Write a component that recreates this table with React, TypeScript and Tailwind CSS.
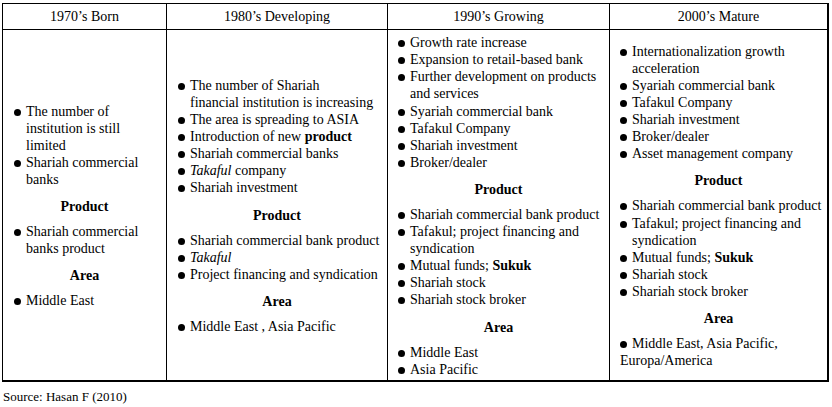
import React from 'react';

const Dot = () => (
  <span className="mt-[6px] mr-[5px] h-[7px] w-[7px] shrink-0 rounded-full bg-black" />
);

const Item = ({ children }: { children: React.ReactNode }) => (
  <div className="flex items-start">
    <Dot />
    <div className="whitespace-nowrap">{children}</div>
  </div>
);

const Heading = ({ children }: { children: React.ReactNode }) => (
  <div className="mt-[10px] mb-[8px] text-center font-bold">{children}</div>
);

const headers = ['1970’s Born', '1980’s Developing', '1990’s Growing', '2000’s Mature'];

export default function App() {
  return (
    <div className="h-[407px] w-[832px] overflow-hidden bg-white pt-[3px] pl-[2px] font-['Liberation_Serif','Times_New_Roman',serif] text-[14px] leading-[17.1px] text-black">
      <div className="grid w-[827px] grid-cols-[164px_221px_222px_219px] border-t border-l border-black">
        {/* header row */}
        {headers.map((h, i) => (
          <div
            key={h}
            className={`flex h-[26px] items-center justify-center border-b border-black ${
              i === 3 ? 'border-r-2' : 'border-r'
            }`}
          >
            {h}
          </div>
        ))}

        {/* 1970's */}
        <div className="flex h-[352px] flex-col justify-center border-r border-b-2 border-black px-[11px] pt-[4px] pb-[2px]">
          <Item>
            The number of
            <br />
            institution is still
            <br />
            limited
          </Item>
          <Item>
            Shariah commercial
            <br />
            banks
          </Item>
          <Heading>Product</Heading>
          <Item>
            Shariah commercial
            <br />
            banks product
          </Item>
          <Heading>Area</Heading>
          <Item>Middle East</Item>
        </div>

        {/* 1980's */}
        <div className="flex h-[352px] flex-col justify-center border-r border-b-2 border-black px-[11px] pt-[4px] pb-[2px]">
          <Item>
            The number of Shariah
            <br />
            financial institution is increasing
          </Item>
          <Item>The area is spreading to ASIA</Item>
          <Item>
            Introduction of new <b>product</b>
          </Item>
          <Item>Shariah commercial banks</Item>
          <Item>
            <i>Takaful</i> company
          </Item>
          <Item>Shariah investment</Item>
          <Heading>Product</Heading>
          <Item>Shariah commercial bank product</Item>
          <Item>
            <i>Takaful</i>
          </Item>
          <Item>Project financing and syndication</Item>
          <Heading>Area</Heading>
          <Item>Middle East , Asia Pacific</Item>
        </div>

        {/* 1990's */}
        <div className="flex h-[352px] flex-col justify-center border-r border-b-2 border-black px-[10px] pt-[4px] pb-[2px]">
          <Item>Growth rate increase</Item>
          <Item>Expansion to retail-based bank</Item>
          <Item>
            Further development on products
            <br />
            and services
          </Item>
          <Item>Syariah commercial bank</Item>
          <Item>Tafakul Company</Item>
          <Item>Shariah investment</Item>
          <Item>Broker/dealer</Item>
          <Heading>Product</Heading>
          <Item>Shariah commercial bank product</Item>
          <Item>
            Tafakul; project financing and
            <br />
            syndication
          </Item>
          <Item>
            Mutual funds; <b>Sukuk</b>
          </Item>
          <Item>Shariah stock</Item>
          <Item>Shariah stock broker</Item>
          <Heading>Area</Heading>
          <Item>Middle East</Item>
          <Item>Asia Pacific</Item>
        </div>

        {/* 2000's */}
        <div className="flex h-[352px] flex-col justify-center border-r-2 border-b-2 border-black px-[10px] pt-[4px] pb-[2px]">
          <Item>
            Internationalization growth
            <br />
            acceleration
          </Item>
          <Item>Syariah commercial bank</Item>
          <Item>Tafakul Company</Item>
          <Item>Shariah investment</Item>
          <Item>Broker/dealer</Item>
          <Item>Asset management company</Item>
          <Heading>Product</Heading>
          <Item>Shariah commercial bank product</Item>
          <Item>
            Tafakul; project financing and
            <br />
            syndication
          </Item>
          <Item>
            Mutual funds; <b>Sukuk</b>
          </Item>
          <Item>Shariah stock</Item>
          <Item>Shariah stock broker</Item>
          <Heading>Area</Heading>
          <div className="whitespace-nowrap">
            <span className="mr-[5px] inline-block h-[7px] w-[7px] rounded-full bg-black" />
            Middle East, Asia Pacific,
            <br />
            Europa/America
          </div>
        </div>
      </div>

      <div className="mt-[7px] pl-[1px] text-[13px] leading-[16px]">Source: Hasan F (2010)</div>
    </div>
  );
}
